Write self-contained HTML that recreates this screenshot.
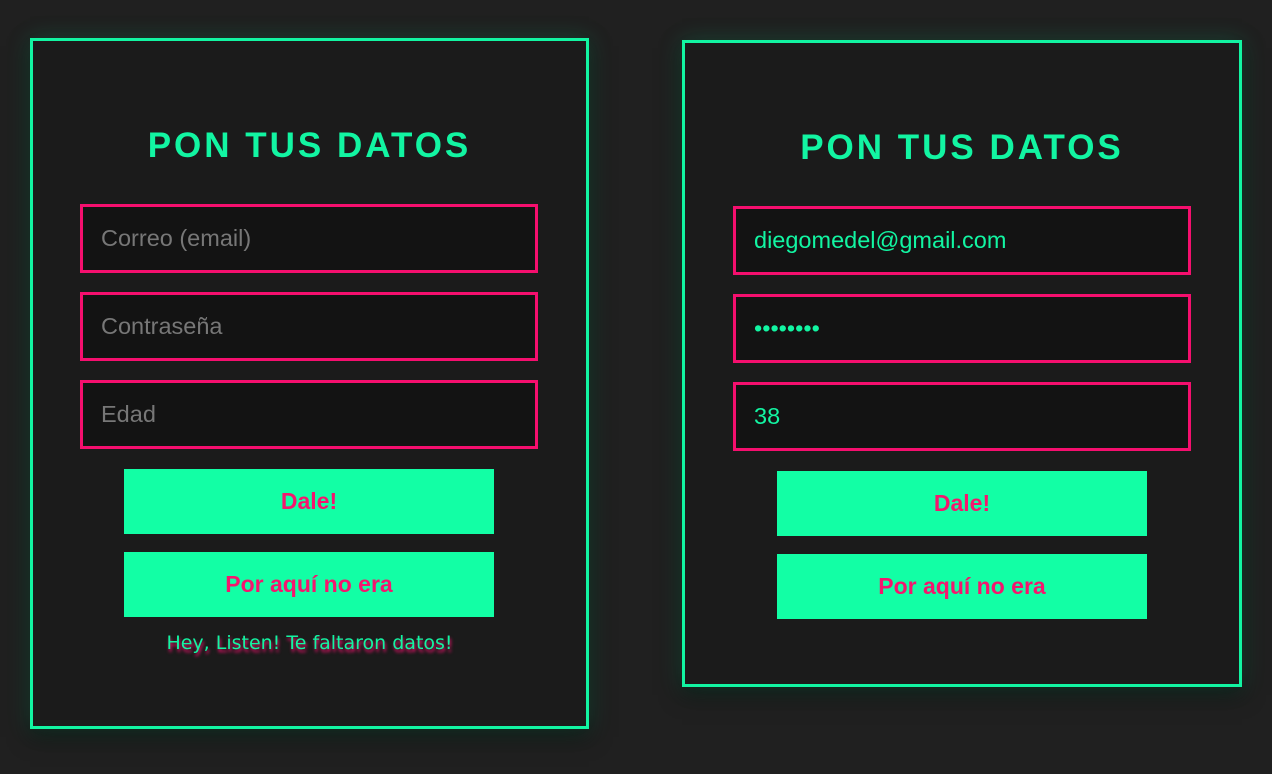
<!DOCTYPE html>
<html><head><style>
body{margin:0;width:1272px;height:774px;background:#202020;position:relative;overflow:hidden;font-family:"Liberation Sans",sans-serif}
.card{position:absolute;box-sizing:border-box;border:3px solid #12f5a2;background:#1b1b1b;box-shadow:0 0 22px rgba(18,245,162,.18),0 8px 20px rgba(0,0,0,.5)}
.h{position:absolute;left:0;right:0;text-align:center;color:#12f5a2;font-weight:bold;font-size:35px;letter-spacing:3px;font-family:"Liberation Sans",sans-serif}
.in{position:absolute;box-sizing:border-box;width:458px;height:69px;border:3px solid #f50f6e;background:#131313;font-size:23.5px;padding-left:18px;line-height:63px;color:#777}
.in.f{color:#12f5a2}
.b{position:absolute;width:370px;height:65px;background:#12ffa5;color:#f5166e;font-weight:bold;font-size:23px;text-align:center;line-height:65px}
.m{position:absolute;left:0;right:0;text-align:center;color:#12f5a2;font-size:19px;text-shadow:1px 3px 3px #f50f6e;font-family:"DejaVu Sans",sans-serif}
</style></head><body>
<div class="card" style="left:30px;top:38px;width:559px;height:691px"></div>
<div class="h" style="left:30px;width:559px;top:126px">PON TUS DATOS</div>
<div class="in" style="left:80px;top:204px">Correo (email)</div>
<div class="in" style="left:80px;top:292px">Contraseña</div>
<div class="in" style="left:80px;top:380px">Edad</div>
<div class="b" style="left:124px;top:469px">Dale!</div>
<div class="b" style="left:124px;top:552px">Por aquí no era</div>
<div class="m" style="left:30px;width:559px;top:632px">Hey, Listen! Te faltaron datos!</div>

<div class="card" style="left:682px;top:40px;width:560px;height:647px"></div>
<div class="h" style="left:682px;width:560px;top:128px">PON TUS DATOS</div>
<div class="in f" style="left:733px;top:206px">diegomedel@gmail.com</div>
<div class="in f" style="left:733px;top:294px">••••••••</div>
<div class="in f" style="left:733px;top:382px">38</div>
<div class="b" style="left:777px;top:471px">Dale!</div>
<div class="b" style="left:777px;top:554px">Por aquí no era</div>
</body></html>
